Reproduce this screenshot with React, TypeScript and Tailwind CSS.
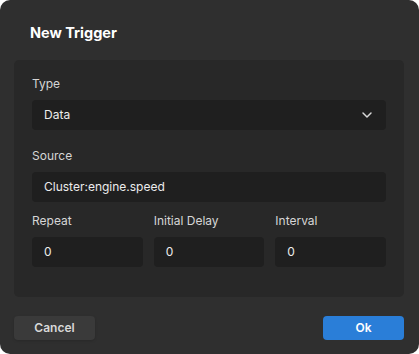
import { ChevronDown } from 'lucide-react';

const font = { fontFamily: 'Inter, "Noto Sans", sans-serif' };

function Field({ label, value, className = '' }: { label: string; value: string; className?: string }) {
  return (
    <div className={className}>
      <div className="text-[12px] leading-[16px] text-[#d6d6d6] mb-[8px]">{label}</div>
      <div className="h-[30px] rounded-[4px] bg-[#1f1f1f] flex items-center px-[12px] text-[12px] text-[#ececec]">
        {value}
      </div>
    </div>
  );
}

export default function App() {
  return (
    <div className="w-[419px] h-[354px] bg-white" style={font}>
      <div className="w-full h-full rounded-[10px] bg-[#2f2f2f] pl-[14px] pr-[15px] flex flex-col">
        <h1 className="pt-[24px] pl-[16px] text-[14.5px] leading-[18px] font-bold text-white">New Trigger</h1>

        <div className="mt-[18px] rounded-[5px] bg-[#282828] px-[18px] pt-[16px] pb-[30px]">
          <div className="text-[12px] leading-[16px] text-[#d6d6d6] mb-[8px]">Type</div>
          <div className="h-[30px] rounded-[4px] bg-[#1f1f1f] flex items-center justify-between pl-[12px] pr-[11px] text-[12px] text-[#ececec]">
            <span>Data</span>
            <ChevronDown size={16} strokeWidth={2.2} className="text-[#d8d8d8]" />
          </div>

          <Field label="Source" value="Cluster:engine.speed" className="mt-[18px]" />

          <div className="mt-[11px] grid grid-cols-3 gap-[11px]">
            <Field label="Repeat" value="0" />
            <Field label="Initial Delay" value="0" />
            <Field label="Interval" value="0" />
          </div>
        </div>

        <div className="mt-[19px] flex justify-between">
          <button className="w-[81px] h-[24px] rounded-[4px] bg-[#3a3a3a] text-[12px] font-semibold text-[#d8d8d8] shadow-sm">
            Cancel
          </button>
          <button className="w-[81px] h-[24px] rounded-[4px] bg-[#2a7ed8] text-[12px] font-semibold text-white">
            Ok
          </button>
        </div>
      </div>
    </div>
  );
}
